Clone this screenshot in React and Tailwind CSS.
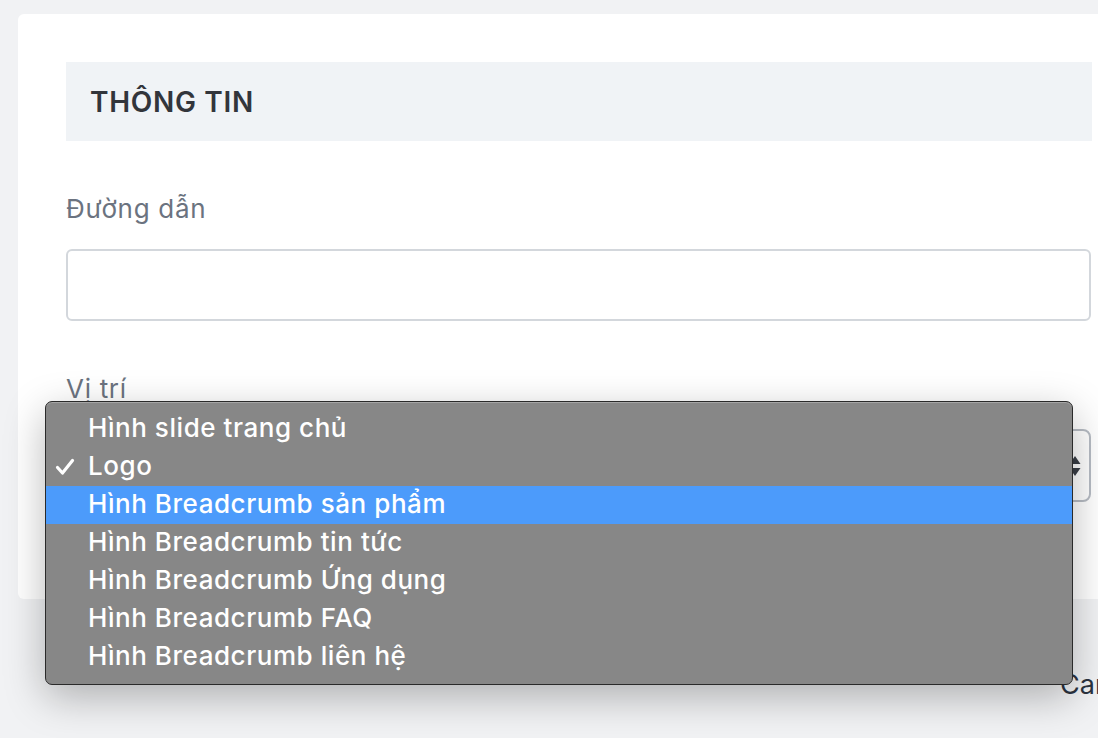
const options = [
  "Hình slide trang chủ",
  "Logo",
  "Hình Breadcrumb sản phẩm",
  "Hình Breadcrumb tin tức",
  "Hình Breadcrumb Ứng dụng",
  "Hình Breadcrumb FAQ",
  "Hình Breadcrumb liên hệ",
];

export default function App() {
  const selected = 1;
  const hovered = 2;

  return (
    <div className="relative w-[1098px] h-[738px] overflow-hidden bg-[#f1f2f4] font-['Inter',sans-serif]">
      <div className="ml-[18px] mt-[14px] w-[1120px] h-[585px] bg-white rounded-l-md pl-[48px] pt-[48px] pr-[46px]">
        <div className="w-[1026px] h-[79px] bg-[#f0f3f6] flex items-center px-6">
          <h2 className="text-[28px] font-semibold text-[#32353b] tracking-[0.7px]">THÔNG TIN</h2>
        </div>

        <label className="block mt-[50px] text-[26px] leading-[36px] tracking-[0.7px] text-[#6b7380]">Đường dẫn</label>
        <input
          type="text"
          className="mt-[22px] block w-[1025px] h-[72px] border-2 border-[#d3d7dc] rounded-md bg-white outline-none"
        />

        <label className="block mt-[50px] text-[26px] leading-[36px] tracking-[0.7px] text-[#6b7380]">Vị trí</label>
        <div className="mt-[22px] w-[1025px] h-[73px] border-2 border-[#b7bcc4] rounded-lg bg-white flex items-center justify-end pr-[8px]">
          <svg width="12" height="22" viewBox="0 0 12 22" className="text-[#3a3f47]">
            <path d="M6 1 L11.5 9 L0.5 9 Z" fill="currentColor" />
            <path d="M6 21 L11.5 13 L0.5 13 Z" fill="currentColor" />
          </svg>
        </div>
      </div>

      <div className="flex pl-[1060px] mt-[68px]">
        <button className="text-[27px] leading-[36px] text-[#2b3340] whitespace-nowrap">Cancel</button>
      </div>

      <ul className="absolute left-[45px] top-[401px] w-[1028px] py-[8px] bg-[#878787] border border-[#2a2a2a] rounded-[7px] shadow-[0_12px_40px_rgba(0,0,0,0.28),inset_0_1px_0_rgba(255,255,255,0.25)]">
        {options.map((opt, i) => (
          <li
            key={opt}
            className={`relative h-[38px] flex items-center pl-[42px] pb-[3px] text-[26px] font-medium tracking-[0.55px] text-white ${i === hovered ? 'bg-[#4c9bfb]' : ''}`}
          >
            {i === selected && (
              <svg width="20" height="18" viewBox="0 0 20 18" className="absolute left-[9px] top-[10px]">
                <path d="M2.5 9.5 L7.5 15 L17.5 2.5" fill="none" stroke="white" strokeWidth="3.2" strokeLinecap="round" strokeLinejoin="round" />
              </svg>
            )}
            {opt}
          </li>
        ))}
      </ul>
    </div>
  );
}
